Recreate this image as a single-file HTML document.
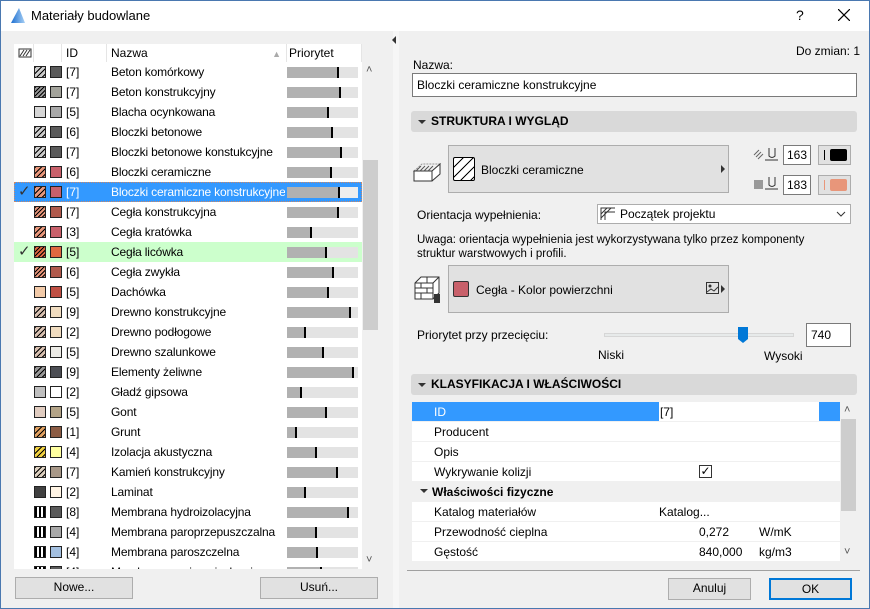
<!DOCTYPE html>
<html><head><meta charset="utf-8"><style>
*{box-sizing:border-box;margin:0;padding:0}
body{width:870px;height:609px;overflow:hidden;background:#f0f0f0;font-family:"Liberation Sans",sans-serif;font-size:12px;color:#000;position:relative}
.a{position:absolute}
#win{position:absolute;left:0;top:0;width:870px;height:609px;border:1px solid #4a78b0;pointer-events:none}
#title{position:absolute;left:0;top:0;width:870px;height:31px;background:#fff}
.list{position:absolute;left:14px;top:44px;width:348px;height:525px;background:#fff;overflow:hidden}
.hdr{position:absolute;top:0;height:18px;font-size:12px;line-height:18px;border-right:1px solid #e5e5e5}
.row{position:absolute;left:0;width:348px;height:20px;line-height:20px}
.sw{position:absolute;top:4px;width:12px;height:12px;border:1px solid #222}
.s1{left:20px}.s2{left:36px}
.id{position:absolute;left:52px}
.nm{position:absolute;left:97px;white-space:nowrap;width:174px;overflow:hidden;letter-spacing:-0.15px}
.bar{position:absolute;left:273px;top:5px;width:71px;height:11px;background:#e3e3e3}
.bar i{position:absolute;left:0;top:0;height:11px;background:#b1b1b1;border-right:2px solid #000}
.chk{position:absolute;left:4px;font-size:15px;color:#333}
.h1{background:repeating-linear-gradient(135deg,#000 0 1px,transparent 1px 3px)}
.h2{background:repeating-linear-gradient(135deg,#000 0 1px,transparent 1px 4px)}
.btn{position:absolute;background:#e1e1e1;border:1px solid #adadad;text-align:center;line-height:19px}
.sec{position:absolute;left:411px;width:446px;height:21px;background:#d9d9d9;border-radius:3px;font-weight:bold;line-height:21px;padding-left:20px}
.sec:before{content:"";position:absolute;left:7px;top:9px;border:4px solid transparent;border-top:4px solid #333;border-bottom:0}
.inp{position:absolute;background:#fff;border:1px solid #7a7a7a;padding-left:4px}
.tr{position:absolute;left:412px;width:428px;height:20px;line-height:20px;background:#fff;border-bottom:1px solid #f0f0f0}
.tr span{position:absolute}
</style></head><body>
<div id="title">
<svg class="a" style="left:10px;top:7px" width="16" height="17"><defs><linearGradient id="g" x1="0" x2="1"><stop offset="0" stop-color="#1d6fd0"/><stop offset="1" stop-color="#a8d0f5"/></linearGradient></defs><path d="M1 16 L9 1 L15 16 Z" fill="url(#g)"/></svg>
<div class="a" style="left:31px;top:8px;font-size:13px">Materiały budowlane</div>
<div class="a" style="left:796px;top:7px;font-size:14px">?</div>
<svg class="a" style="left:838px;top:9px" width="12" height="12"><path d="M0 0L12 12M12 0L0 12" stroke="#000" stroke-width="1.2"/></svg>
</div>

<div class="list">
<div class="hdr" style="left:0;width:20px"><svg style="position:absolute;left:4px;top:4px" width="14" height="10"><rect x="1" y="1" width="12" height="8" fill="none" stroke="#333"/><path d="M2 8L6 2M5 8L9 2M8 8L12 2" stroke="#333"/></svg></div>
<div class="hdr" style="left:20px;width:28px"></div>
<div class="hdr" style="left:48px;width:45px;padding-left:4px">ID</div>
<div class="hdr" style="left:93px;width:180px;padding-left:4px">Nazwa<span style="position:absolute;right:5px;top:1px;color:#aaa;font-size:9px">▲</span></div>
<div class="hdr" style="left:273px;width:75px;padding-left:2px">Priorytet</div>
<div style="position:absolute;top:18px;left:0;width:348px;">
<div class="row" style="top:0"><div class="sw s1 h2" style="background-color:#ccc"></div><div class="sw s2" style="background:#5b5b5b"></div><span class="id">[7]</span><span class="nm">Beton komórkowy</span><div class="bar"><i style="width:52px"></i></div></div>
<div class="row" style="top:20px"><div class="sw s1 h1" style="background-color:#999"></div><div class="sw s2" style="background:#a3a39b"></div><span class="id">[7]</span><span class="nm">Beton konstrukcyjny</span><div class="bar"><i style="width:54px"></i></div></div>
<div class="row" style="top:40px"><div class="sw s1" style="background:#d6d6d6"></div><div class="sw s2" style="background:#a8a8a8"></div><span class="id">[5]</span><span class="nm">Blacha ocynkowana</span><div class="bar"><i style="width:42px"></i></div></div>
<div class="row" style="top:60px"><div class="sw s1 h2" style="background-color:#ccc"></div><div class="sw s2" style="background:#5b5b5b"></div><span class="id">[6]</span><span class="nm">Bloczki betonowe</span><div class="bar"><i style="width:46px"></i></div></div>
<div class="row" style="top:80px"><div class="sw s1 h2" style="background-color:#ccc"></div><div class="sw s2" style="background:#5b5b5b"></div><span class="id">[7]</span><span class="nm">Bloczki betonowe konstukcyjne</span><div class="bar"><i style="width:55px"></i></div></div>
<div class="row" style="top:100px"><div class="sw s1 h2" style="background-color:#e8967a"></div><div class="sw s2" style="background:#c8606a"></div><span class="id">[6]</span><span class="nm">Bloczki ceramiczne</span><div class="bar"><i style="width:45px"></i></div></div>
<div class="row" style="top:120px;background:#3399ff;color:#fff;outline:1px dotted #c86;outline-offset:-1px"><span class="chk">✓</span><div class="sw s1 h2" style="background-color:#e8967a"></div><div class="sw s2" style="background:#c8606a"></div><span class="id">[7]</span><span class="nm">Bloczki ceramiczne konstrukcyjne</span><div class="bar" style="background:#eee"><i style="width:53px"></i></div></div>
<div class="row" style="top:140px"><div class="sw s1 h1" style="background-color:#e8967a"></div><div class="sw s2" style="background:#b05a4c"></div><span class="id">[7]</span><span class="nm">Cegła konstrukcyjna</span><div class="bar"><i style="width:52px"></i></div></div>
<div class="row" style="top:160px"><div class="sw s1 h2" style="background-color:#e8967a"></div><div class="sw s2" style="background:#c8606a"></div><span class="id">[3]</span><span class="nm">Cegła kratówka</span><div class="bar"><i style="width:25px"></i></div></div>
<div class="row" style="top:180px;background:#ccffcc"><span class="chk">✓</span><div class="sw s1 h1" style="background-color:#e06840"></div><div class="sw s2" style="background:#e06840"></div><span class="id">[5]</span><span class="nm">Cegła licówka</span><div class="bar"><i style="width:40px"></i></div></div>
<div class="row" style="top:200px"><div class="sw s1 h1" style="background-color:#e8967a"></div><div class="sw s2" style="background:#b05a4c"></div><span class="id">[6]</span><span class="nm">Cegła zwykła</span><div class="bar"><i style="width:47px"></i></div></div>
<div class="row" style="top:220px"><div class="sw s1" style="background:#f2caa8"></div><div class="sw s2" style="background:#c05044"></div><span class="id">[5]</span><span class="nm">Dachówka</span><div class="bar"><i style="width:42px"></i></div></div>
<div class="row" style="top:240px"><div class="sw s1 h2" style="background-color:#d8c0b0"></div><div class="sw s2" style="background:#f0dcc0"></div><span class="id">[9]</span><span class="nm">Drewno konstrukcyjne</span><div class="bar"><i style="width:64px"></i></div></div>
<div class="row" style="top:260px"><div class="sw s1 h2" style="background-color:#d8c0b0"></div><div class="sw s2" style="background:#f0dcc0"></div><span class="id">[2]</span><span class="nm">Drewno podłogowe</span><div class="bar"><i style="width:19px"></i></div></div>
<div class="row" style="top:280px"><div class="sw s1 h2" style="background-color:#d8c0b0"></div><div class="sw s2" style="background:#ecebe6"></div><span class="id">[5]</span><span class="nm">Drewno szalunkowe</span><div class="bar"><i style="width:37px"></i></div></div>
<div class="row" style="top:300px"><div class="sw s1 h2" style="background-color:#999"></div><div class="sw s2" style="background:#4c4e54"></div><span class="id">[9]</span><span class="nm">Elementy żeliwne</span><div class="bar"><i style="width:67px"></i></div></div>
<div class="row" style="top:320px"><div class="sw s1" style="background:radial-gradient(#000 30%,#fff 35%) 0 0/2px 2px"></div><div class="sw s2" style="background:#fff"></div><span class="id">[2]</span><span class="nm">Gładź gipsowa</span><div class="bar"><i style="width:15px"></i></div></div>
<div class="row" style="top:340px"><div class="sw s1" style="background:#e0ccc0"></div><div class="sw s2" style="background:#b4a488"></div><span class="id">[5]</span><span class="nm">Gont</span><div class="bar"><i style="width:40px"></i></div></div>
<div class="row" style="top:360px"><div class="sw s1 h2" style="background-color:#e0a060"></div><div class="sw s2" style="background:#8c5c44"></div><span class="id">[1]</span><span class="nm">Grunt</span><div class="bar"><i style="width:10px"></i></div></div>
<div class="row" style="top:380px"><div class="sw s1 h2" style="background-color:#f0d040"></div><div class="sw s2" style="background:#ffffa0"></div><span class="id">[4]</span><span class="nm">Izolacja akustyczna</span><div class="bar"><i style="width:30px"></i></div></div>
<div class="row" style="top:400px"><div class="sw s1 h2" style="background-color:#ddd0c0"></div><div class="sw s2" style="background:#a89888"></div><span class="id">[7]</span><span class="nm">Kamień konstrukcyjny</span><div class="bar"><i style="width:51px"></i></div></div>
<div class="row" style="top:420px"><div class="sw s1" style="background:radial-gradient(#fff 25%,#000 30%) 0 0/2px 2px"></div><div class="sw s2" style="background:#fff4e4"></div><span class="id">[2]</span><span class="nm">Laminat</span><div class="bar"><i style="width:19px"></i></div></div>
<div class="row" style="top:440px"><div class="sw s1" style="background:repeating-linear-gradient(90deg,#000 0 2px,#fff 2px 4px)"></div><div class="sw s2" style="background:#5b5b5b"></div><span class="id">[8]</span><span class="nm">Membrana hydroizolacyjna</span><div class="bar"><i style="width:62px"></i></div></div>
<div class="row" style="top:460px"><div class="sw s1" style="background:repeating-linear-gradient(90deg,#000 0 2px,#fff 2px 4px)"></div><div class="sw s2" style="background:#a8a8a8"></div><span class="id">[4]</span><span class="nm">Membrana paroprzepuszczalna</span><div class="bar"><i style="width:30px"></i></div></div>
<div class="row" style="top:480px"><div class="sw s1" style="background:repeating-linear-gradient(90deg,#000 0 2px,#fff 2px 4px)"></div><div class="sw s2" style="background:#a4c0e0"></div><span class="id">[4]</span><span class="nm">Membrana paroszczelna</span><div class="bar"><i style="width:31px"></i></div></div>
<div class="row" style="top:500px"><div class="sw s1" style="background:repeating-linear-gradient(90deg,#000 0 2px,#fff 2px 4px)"></div><div class="sw s2" style="background:#5b5b5b"></div><span class="id">[4]</span><span class="nm">Membrana poziomoizolacyjna</span><div class="bar"><i style="width:35px"></i></div></div>
</div>
</div>
<div class="a" style="left:362px;top:62px;width:16px;height:507px;background:#f0f0f0"></div>
<div class="a" style="left:363px;top:160px;width:15px;height:170px;background:#cdcdcd"></div>
<div class="a" style="left:366px;top:64px;font-size:11px;color:#555">˄</div>
<div class="a" style="left:366px;top:554px;font-size:11px;color:#555">˅</div>
<div class="btn" style="left:15px;top:577px;width:118px;height:22px">Nowe...</div>
<div class="btn" style="left:260px;top:577px;width:118px;height:22px">Usuń...</div>

<div class="a" style="left:393px;top:31px;width:6px;height:577px;background:#f6f6f6"></div>
<div class="a" style="left:392px;top:36px;border:4px solid transparent;border-right:4px solid #333;border-left:0"></div>

<div class="a" style="left:796px;top:44px">Do zmian: 1</div>
<div class="a" style="left:413px;top:58px">Nazwa:</div>
<div class="inp" style="left:412px;top:73px;width:445px;height:24px;line-height:22px">Bloczki ceramiczne konstrukcyjne</div>

<div class="sec" style="top:111px">STRUKTURA I WYGLĄD</div>
<svg class="a" style="left:413px;top:157px" width="28" height="26"><path d="M1 14 L9 7 H27 L19 14 Z" fill="none" stroke="#999" stroke-dasharray="2 1"/><path d="M1 14 H19 V24 H1 Z M19 14 L27 7 V17 L19 24" fill="#fff" stroke="#333"/><path d="M3 14 L8 9 M7 14 L12 9 M11 14 L16 9 M15 14 L20 9" stroke="#555"/></svg>
<div class="btn" style="left:448px;top:145px;width:281px;height:48px"></div>
<div class="a" style="left:453px;top:157px;width:22px;height:24px;border:1px solid #000;border-radius:2px;background:repeating-linear-gradient(135deg,#fff 0 6px,#000 6px 7px)"></div>
<div class="a" style="left:481px;top:163px">Bloczki ceramiczne</div>
<div class="a" style="left:721px;top:165px;border:4px solid transparent;border-left:4px solid #333;border-right:0"></div>
<svg class="a" style="left:753px;top:147px" width="26" height="16"><path d="M1 8L6 3M3 10L8 5M5 12L10 7" stroke="#666"/><path d="M16 1V9Q19 12 22 9V1M12 13H25" stroke="#333" fill="none"/></svg>
<div class="inp" style="left:783px;top:145px;width:28px;height:20px;line-height:18px;padding-left:3px">163</div>
<div class="a" style="left:818px;top:145px;width:33px;height:20px;background:#e1e1e1;border:1px solid #adadad"><div class="a" style="left:5px;top:4px;width:1px;height:10px;background:#000"></div><div class="a" style="left:11px;top:3px;width:17px;height:12px;background:#000;border-radius:2px"></div></div>
<svg class="a" style="left:753px;top:174px" width="26" height="20"><rect x="1" y="6" width="9" height="9" fill="#999"/><path d="M16 3V11Q19 14 22 11V3M12 15H25" stroke="#333" fill="none"/></svg>
<div class="inp" style="left:783px;top:175px;width:28px;height:20px;line-height:18px;padding-left:3px">183</div>
<div class="a" style="left:818px;top:175px;width:33px;height:20px;background:#e1e1e1;border:1px solid #adadad"><div class="a" style="left:5px;top:4px;width:1px;height:10px;background:#e8967a"></div><div class="a" style="left:11px;top:3px;width:17px;height:12px;background:#e8967a;border-radius:2px"></div></div>

<div class="a" style="left:417px;top:208px">Orientacja wypełnienia:</div>
<div class="inp" style="left:597px;top:204px;width:254px;height:20px;border-color:#adadad;line-height:18px;padding-left:22px">Początek projektu</div>
<svg class="a" style="left:600px;top:207px" width="16" height="14"><path d="M1 13V1H15M1 7L7 1M1 11L11 1M5 13V5H15" stroke="#333" fill="none"/></svg>
<svg class="a" style="left:836px;top:210px" width="10" height="8"><path d="M1 2L5 6L9 2" stroke="#333" fill="none"/></svg>
<div class="a" style="left:417px;top:233px;line-height:14px;font-size:11.5px">Uwaga: orientacja wypełnienia jest wykorzystywana tylko przez komponenty<br>struktur warstwowych i profili.</div>

<svg class="a" style="left:413px;top:275px" width="28" height="30"><path d="M2 8L8 2H26V18L20 24H2Z M2 8H20V24 M20 8L26 2" fill="#fff" stroke="#333"/><path d="M2 13H20M2 18H20M8 8V13M14 13V18M8 18V24M14 8V2" stroke="#333"/><rect x="21" y="19" width="6" height="9" fill="#333"/></svg>
<div class="btn" style="left:448px;top:265px;width:281px;height:48px"></div>
<div class="a" style="left:453px;top:281px;width:16px;height:16px;background:#c8606a;border:1px solid #333;border-radius:2px"></div>
<div class="a" style="left:476px;top:283px">Cegła - Kolor powierzchni</div>
<svg class="a" style="left:706px;top:282px" width="14" height="12"><rect x="0.5" y="0.5" width="12" height="11" fill="none" stroke="#333"/><circle cx="4" cy="4" r="1.5" fill="#333"/><path d="M1 10L5 7L8 9L12 5" stroke="#333" fill="none"/></svg>
<div class="a" style="left:721px;top:285px;border:4px solid transparent;border-left:4px solid #333;border-right:0"></div>

<div class="a" style="left:417px;top:328px">Priorytet przy przecięciu:</div>
<div class="a" style="left:604px;top:333px;width:190px;height:4px;background:#e7eaea;border:1px solid #d6d6d6"></div>
<svg class="a" style="left:738px;top:327px" width="10" height="16"><path d="M0 0H10V12L5 16L0 12Z" fill="#0078d7"/></svg>
<div class="inp" style="left:806px;top:323px;width:45px;height:24px;line-height:22px">740</div>
<div class="a" style="left:598px;top:348px">Niski</div>
<div class="a" style="left:764px;top:349px">Wysoki</div>

<div class="sec" style="top:374px">KLASYFIKACJA I WŁAŚCIWOŚCI</div>
<div class="tr" style="top:402px;background:#3399ff;color:#fff"><span style="left:22px">ID</span><span style="left:247px;width:160px;height:19px;background:#fff;color:#000;padding-left:1px">[7]</span></div>
<div class="tr" style="top:422px"><span style="left:22px">Producent</span></div>
<div class="tr" style="top:442px"><span style="left:22px">Opis</span></div>
<div class="tr" style="top:462px"><span style="left:22px">Wykrywanie kolizji</span><span style="left:287px;top:3px;width:13px;height:13px;border:1px solid #333;background:#fff;line-height:11px;font-size:12px;text-align:center">✓</span></div>
<div class="tr" style="top:482px;background:#f0f0f0;font-weight:bold"><span style="left:8px;top:7px;border:4px solid transparent;border-top:4px solid #333;border-bottom:0"></span><span style="left:20px">Właściwości fizyczne</span></div>
<div class="tr" style="top:502px"><span style="left:22px">Katalog materiałów</span><span style="left:247px">Katalog...</span></div>
<div class="tr" style="top:522px"><span style="left:22px">Przewodność cieplna</span><span style="left:287px">0,272</span><span style="left:347px">W/mK</span></div>
<div class="tr" style="top:542px"><span style="left:22px">Gęstość</span><span style="left:287px">840,000</span><span style="left:347px">kg/m3</span></div>
<div class="a" style="left:840px;top:402px;width:16px;height:160px;background:#f0f0f0"></div>
<div class="a" style="left:841px;top:419px;width:15px;height:92px;background:#cdcdcd"></div>
<div class="a" style="left:844px;top:404px;font-size:11px;color:#555">˄</div>
<div class="a" style="left:844px;top:546px;font-size:11px;color:#555">˅</div>

<div class="a" style="left:407px;top:570px;width:453px;height:1px;background:#a0a0a0"></div>
<div class="btn" style="left:668px;top:578px;width:83px;height:22px">Anuluj</div>
<div class="btn" style="left:769px;top:578px;width:83px;height:22px;border:2px solid #0078d7;line-height:18px">OK</div>
<div id="win"></div>
</body></html>
